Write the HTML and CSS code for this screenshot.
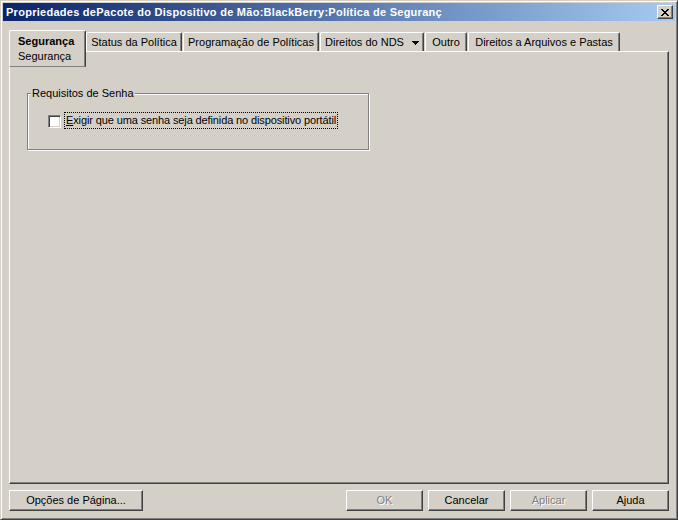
FILE: index.html
```html
<!DOCTYPE html>
<html lang="pt">
<head>
<meta charset="utf-8">
<title>Propriedades</title>
<link rel="stylesheet" href="styles.css">
</head>
<body>
<div class="window">
  <div class="titlebar">
    <span class="title">Propriedades dePacote do Dispositivo de Mão:BlackBerry:Política de Seguranç</span>
    <button class="close" type="button" aria-label="Fechar">
      <svg width="8" height="7" viewBox="0 0 8 7" shape-rendering="crispEdges">
        <g fill="#000">
          <rect x="0" y="0" width="2" height="1"/><rect x="6" y="0" width="2" height="1"/>
          <rect x="1" y="1" width="2" height="1"/><rect x="5" y="1" width="2" height="1"/>
          <rect x="2" y="2" width="4" height="1"/>
          <rect x="3" y="3" width="2" height="1"/>
          <rect x="2" y="4" width="4" height="1"/>
          <rect x="1" y="5" width="2" height="1"/><rect x="5" y="5" width="2" height="1"/>
          <rect x="0" y="6" width="2" height="1"/><rect x="6" y="6" width="2" height="1"/>
        </g>
      </svg>
    </button>
  </div>

  <div class="content">
    <div class="tabs">
      <div class="tab tab-active">
        <div class="tab-main">Segurança</div>
        <div class="tab-sub">Segurança</div>
      </div>
      <div class="tab tab-status">Status da Política</div>
      <div class="tab tab-prog">Programação de Políticas</div>
      <div class="tab tab-nds">Direitos do NDS
        <svg class="caret" width="7" height="4" viewBox="0 0 7 4" shape-rendering="crispEdges">
          <path d="M0 0h7v1h-1v1h-1v1h-1v1h-1v-1h-1v-1h-1v-1h-1z" fill="#000"/>
        </svg>
      </div>
      <div class="tab tab-outro">Outro</div>
      <div class="tab tab-arq">Direitos a Arquivos e Pastas</div>
    </div>

    <div class="panel">
      <div class="group">
        <span class="legend">Requisitos de Senha</span>
        <label class="check">
          <span class="box"></span>
          <span class="focus"><u>E</u>xigir que uma senha seja definida no dispositivo portátil</span>
        </label>
      </div>
    </div>

    <div class="buttons">
      <button class="btn btn-wide" type="button">Opções de Pá<u>g</u>ina...</button>
      <button class="btn" type="button" disabled>OK</button>
      <button class="btn" type="button">Cancelar</button>
      <button class="btn" type="button" disabled>Aplicar</button>
      <button class="btn" type="button">A<u>j</u>uda</button>
    </div>
  </div>
</div>
</body>
</html>
```

FILE: styles.css
```css
html, body {
  margin: 0;
  padding: 0;
  background: #D4D0C8;
}

body {
  font: 11px "Liberation Sans", Arial, sans-serif;
  color: #000;
}

/* outer window frame: two bevel lines plus one pixel of face */
.window {
  width: 678px;
  height: 520px;
  box-sizing: border-box;
  border: 1px solid;
  border-color: #D4D0C8 #404040 #404040 #D4D0C8;
  box-shadow: inset 1px 1px #FFFFFF, inset -1px -1px #808080;
  padding: 2px;
  background: #D4D0C8;
  display: flex;
  flex-direction: column;
}

.titlebar {
  height: 18px;
  display: flex;
  align-items: center;
  padding: 0 2px 0 2px;
  background: linear-gradient(to right, #0A246A, #A6CAF0);
}

.title {
  flex: 1;
  color: #FFFFFF;
  font-weight: bold;
  line-height: 18px;
  letter-spacing: 0.27px;
  white-space: nowrap;
  overflow: hidden;
  padding-left: 1px;
}

.close {
  width: 16px;
  height: 14px;
  padding: 0;
  margin: 0;
  box-sizing: border-box;
  border: 1px solid;
  border-color: #FFFFFF #404040 #404040 #FFFFFF;
  box-shadow: inset -1px -1px #808080;
  background: #D4D0C8;
  display: flex;
  align-items: center;
  justify-content: center;
}

.close svg {
  display: block;
  margin: 0 1px 0 0;
}

.content {
  flex: 1;
  display: flex;
  flex-direction: column;
  padding: 9px 6px 0 6px;
}

/* tab strip */
.tabs {
  display: flex;
  align-items: flex-end;
  height: 21px;
}

.tab {
  box-sizing: border-box;
  height: 19px;
  border-left: 1px solid #FFFFFF;
  border-top: 1px solid #FFFFFF;
  border-right: 1px solid #404040;
  box-shadow: inset -1px 0 #808080;
  border-radius: 2px 2px 0 0;
  line-height: 17px;
  white-space: nowrap;
  text-align: center;
  margin-left: 1px;
  display: flex;
  align-items: center;
  justify-content: center;
}

.tab-active {
  position: relative;
  z-index: 1;
  width: 77px;
  height: 37px;
  margin-left: 0;
  margin-bottom: -16px;
  border-bottom: 1px solid #808080;
  background: #D4D0C8;
  display: block;
  text-align: left;
  padding: 3px 0 0 8px;
  line-height: 15px;
}

.tab-main {
  font-weight: bold;
}

.tab-status { width: 96px; margin-left: 0; }
.tab-prog   { width: 136px; }
.tab-nds    { width: 104px; }
.tab-outro  { width: 42px; }
.tab-arq    { width: 152px; }

.caret {
  display: block;
  margin-left: 8px;
  margin-top: 1px;
}

/* property page body */
.panel {
  height: 433px;
  box-sizing: border-box;
  border: 1px solid;
  border-color: #FFFFFF #404040 #404040 #FFFFFF;
  box-shadow: inset -1px -1px #808080;
  padding: 41px 0 0 17px;
}

/* etched group box */
.group {
  position: relative;
  width: 342px;
  height: 57px;
  box-sizing: border-box;
  border: 1px solid #808080;
  box-shadow: inset 1px 1px #FFFFFF, 1px 1px #FFFFFF;
}

.legend {
  position: absolute;
  top: -8px;
  left: 3px;
  padding: 0 1px;
  line-height: 14px;
  background: #D4D0C8;
}

.check {
  display: flex;
  align-items: flex-start;
  margin-top: 18px;
  padding-left: 20px;
}

.box {
  width: 13px;
  height: 13px;
  box-sizing: border-box;
  margin-top: 3px;
  border: 1px solid;
  border-color: #808080 #FFFFFF #FFFFFF #808080;
  box-shadow: inset 1px 1px #404040, inset -1px -1px #D4D0C8;
  background: #FFFFFF;
}

.focus {
  margin-left: 3px;
  border: 1px dotted #000;
  padding: 0 1px;
  line-height: 15px;
  letter-spacing: -0.12px;
  white-space: nowrap;
}

/* dialog buttons */
.buttons {
  display: flex;
  gap: 5px;
  margin-top: 6px;
  height: 21px;
}

.btn {
  width: 77px;
  height: 21px;
  box-sizing: border-box;
  padding: 0;
  margin: 0;
  border: 1px solid;
  border-color: #FFFFFF #404040 #404040 #FFFFFF;
  box-shadow: inset -1px -1px #808080;
  background: #D4D0C8;
  font: inherit;
  color: #000;
  line-height: 17px;
}

.btn-wide {
  width: 134px;
  margin-right: auto;
}

.btn:disabled {
  color: #808080;
  text-shadow: 1px 1px #FFFFFF;
}
```
